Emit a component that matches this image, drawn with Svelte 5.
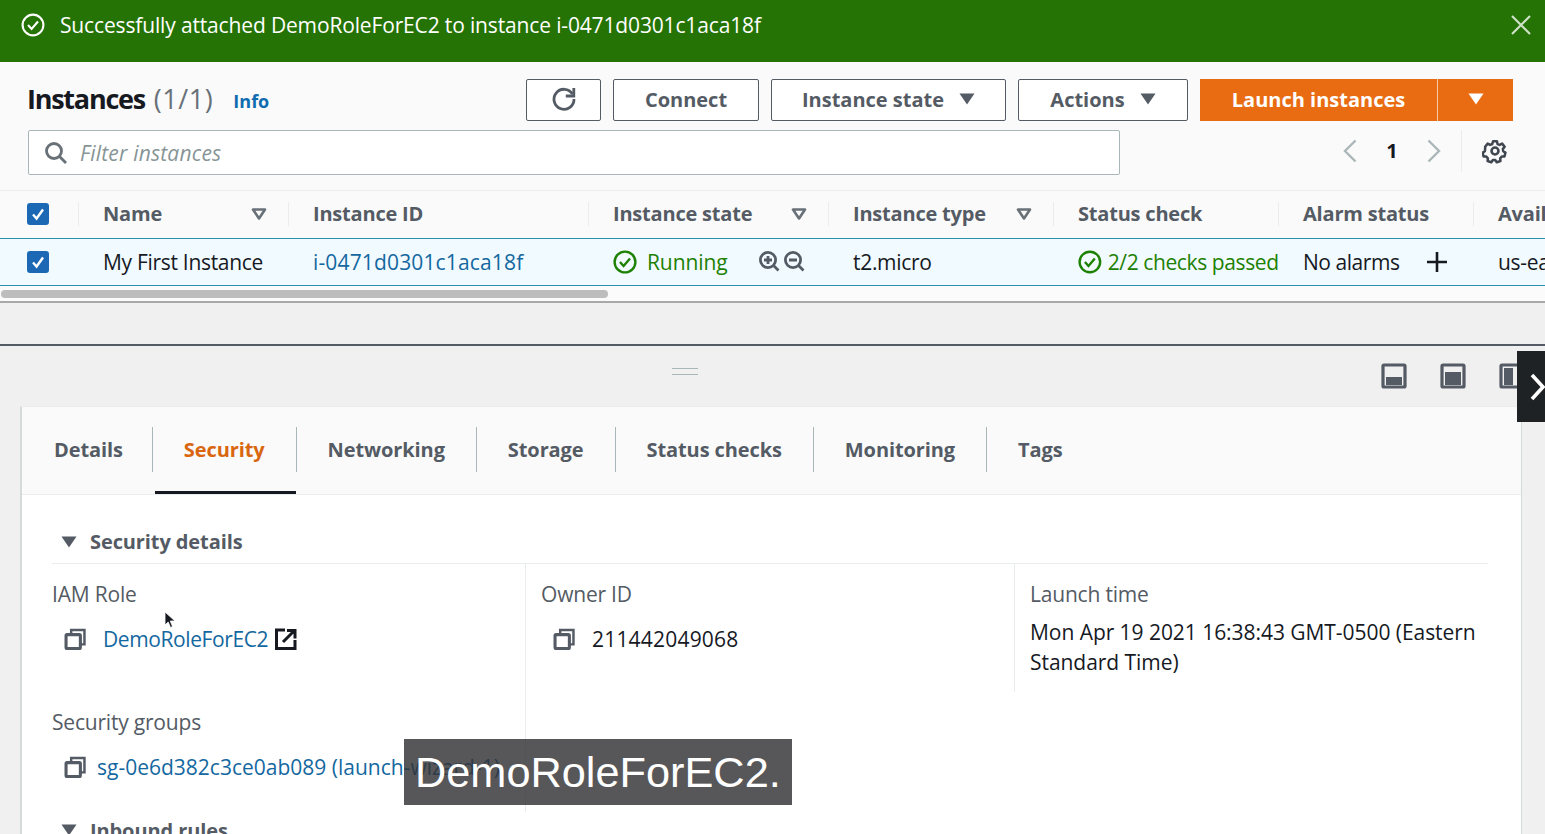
<script>
  const columns = [
    { label: 'Name', width: 210, filter: true },
    { label: 'Instance ID', width: 300 },
    { label: 'Instance state', width: 240, filter: true },
    { label: 'Instance type', width: 225, filter: true },
    { label: 'Status check', width: 225 },
    { label: 'Alarm status', width: 195 },
    { label: 'Availability Zone', width: 200 }
  ];

  const tabs = ['Details', 'Security', 'Networking', 'Storage', 'Status checks', 'Monitoring', 'Tags'];
  const activeTab = 'Security';
</script>

{#snippet check()}
  <span class="checkbox">
    <svg viewBox="0 0 22 22" width="22" height="22">
      <path d="M6 11.5l3.6 4L16 6.5" fill="none" stroke="#fff" stroke-width="2.4" />
    </svg>
  </span>
{/snippet}

{#snippet copy()}
  <svg class="copy" viewBox="0 0 21.500 21.500" width="22" height="22">
    <path d="M7 6V2h13v14h-4" fill="none" stroke="#545b64" stroke-width="2.4" />
    <rect x="2" y="6.500" width="14" height="13.500" fill="none" stroke="#545b64" stroke-width="3" rx="1" />
  </svg>
{/snippet}

{#snippet okIcon()}
  <svg class="ok" viewBox="0 0 24 24" width="24" height="24">
    <circle cx="12" cy="12" r="10.400" fill="none" stroke="#1d8102" stroke-width="2.400" />
    <path d="M7 12l3.600 4L17 8.500" fill="none" stroke="#1d8102" stroke-width="2.400" />
  </svg>
{/snippet}

{#snippet filterIcon()}
  <svg class="sort" viewBox="0 0 16 12" width="16" height="12">
    <path d="M2 1.500h12L8 10.500z" fill="none" stroke="#687078" stroke-width="2.600" stroke-linejoin="round" />
  </svg>
{/snippet}

{#snippet caret(color)}
  <svg viewBox="0 0 16 12" width="16" height="12">
    <path d="M0.500 0.500h15L8 11.500z" fill={color} />
  </svg>
{/snippet}

<div class="page">
  <div class="flash">
    <svg viewBox="0 0 24 24" width="24" height="24">
      <circle cx="12" cy="12" r="10.400" fill="none" stroke="#fff" stroke-width="2.100" />
      <path d="M7 12l3.600 4L17 8.500" fill="none" stroke="#fff" stroke-width="2.100" />
    </svg>
    <span class="flash-text">Successfully attached DemoRoleForEC2 to instance i-0471d0301c1aca18f</span>
    <svg class="close" viewBox="0 0 20 20" width="20" height="20">
      <path d="M1 1l18 18M19 1L1 19" stroke="#cfe0c8" stroke-width="2.200" />
    </svg>
  </div>

  <div class="list-head">
    <div class="title-row">
      <h1>Instances <span class="count">(1/1)</span></h1>
      <span class="info">Info</span>
      <div class="actions">
        <button class="btn icon-btn" aria-label="Refresh">
          <svg viewBox="0 0 26 26" width="26" height="26">
            <path d="M21.500 8A10 10 0 1 0 23 13" fill="none" stroke="#545b64" stroke-width="2.800" />
            <path d="M22.800 2v8h-8" fill="none" stroke="#545b64" stroke-width="2.800" />
          </svg>
        </button>
        <button class="btn connect">Connect</button>
        <button class="btn state">Instance state {@render caret('#545b64')}</button>
        <button class="btn acts">Actions {@render caret('#545b64')}</button>
        <div class="launch">
          <button class="launch-main">Launch instances</button>
          <button class="launch-caret" aria-label="More">{@render caret('#fff')}</button>
        </div>
      </div>
    </div>
    <div class="filter-row">
      <div class="filter">
        <svg viewBox="0 0 24 24" width="24" height="24">
          <circle cx="10" cy="10" r="7.500" fill="none" stroke="#687078" stroke-width="2.800" />
          <path d="M15.500 15.500l6.500 6.500" stroke="#687078" stroke-width="2.800" />
        </svg>
        <span>Filter instances</span>
      </div>
      <div class="pager">
        <svg viewBox="0 0 14 24" width="14" height="24"><path d="M12.500 1.500L2 12l10.500 10.500" fill="none" stroke="#aab7b8" stroke-width="2.400" /></svg>
        <b>1</b>
        <svg viewBox="0 0 14 24" width="14" height="24"><path d="M1.500 1.500L12 12 1.500 22.500" fill="none" stroke="#aab7b8" stroke-width="2.400" /></svg>
      </div>
      <div class="settings">
        <svg viewBox="0 0 24 24" width="26" height="26">
          <path d="M10 2h4l.6 2.800 2.200 1 2.500-1.400 2.600 3.200-1.800 2.200.3 2.400 2.300 1.500-1 3.900-2.800.1-1.600 1.800.3 2.800-3.800 1.300-1.600-2.300h-2.400l-1.600 2.300-3.800-1.300.3-2.800-1.600-1.800-2.800-.1-1-3.900 2.300-1.500.3-2.400L1.900 7.600l2.600-3.200L7 5.800l2.200-1z" fill="none" stroke="#414750" stroke-width="2.600" stroke-linejoin="round" transform="translate(1.200 1.200) scale(.9)" />
          <circle cx="12" cy="12" r="3.200" fill="none" stroke="#414750" stroke-width="2.400" />
        </svg>
      </div>
    </div>
  </div>

  <div class="table">
    <div class="thead">
      <div class="check-cell">{@render check()}</div>
      {#each columns as col}
        <div class="th" style="width: {col.width}px">
          <span>{col.label}</span>
          {#if col.filter}{@render filterIcon()}{/if}
        </div>
      {/each}
    </div>
    <div class="trow">
      <div class="check-cell">{@render check()}</div>
      <div class="td" style="width: 210px">My First Instance</div>
      <div class="td link id" style="width: 300px">i-0471d0301c1aca18f</div>
      <div class="td" style="width: 240px">
        <span class="green running">{@render okIcon()} Running</span>
        <svg class="zoom-icons" viewBox="0 0 48 24" width="48" height="24">
          <circle cx="10" cy="10" r="7.600" fill="none" stroke="#545b64" stroke-width="2.800" />
          <path d="M15.500 15.500l5 5M6 10h8M10 6v8" stroke="#545b64" stroke-width="2.800" />
          <circle cx="35" cy="10" r="7.600" fill="none" stroke="#545b64" stroke-width="2.800" />
          <path d="M40.500 15.500l5 5M31 10h8" stroke="#545b64" stroke-width="2.800" />
        </svg>
      </div>
      <div class="td" style="width: 225px">t2.micro</div>
      <div class="td status" style="width: 225px">
        <span class="green checks">{@render okIcon()} <span class="clip">2/2 checks passed</span></span>
      </div>
      <div class="td alarms" style="width: 195px">
        No alarms
        <svg class="plus" viewBox="0 0 22 22" width="22" height="22">
          <path d="M11 1v20M1 11h20" stroke="#16191f" stroke-width="2.600" />
        </svg>
      </div>
      <div class="td" style="width: 200px">us-east-1a</div>
    </div>
    <div class="scrollbar"><div class="thumb"></div></div>
  </div>

  <div class="gap"></div>

  <div class="split">
    <div class="split-top">
      <div class="handle"></div>
      <div class="modes">
        <svg viewBox="0 0 26 26" width="26" height="26"><rect x="2" y="2" width="22" height="22" rx="1" fill="none" stroke="#545b64" stroke-width="3.200" /><rect x="5" y="14" width="16" height="8" fill="#545b64" /></svg>
        <svg viewBox="0 0 26 26" width="26" height="26"><rect x="2" y="2" width="22" height="22" rx="1" fill="none" stroke="#545b64" stroke-width="3.200" /><rect x="5" y="9" width="16" height="13" fill="#545b64" /></svg>
        <svg viewBox="0 0 26 26" width="26" height="26"><rect x="2" y="2" width="22" height="22" rx="1" fill="none" stroke="#545b64" stroke-width="3.200" /><rect x="5" y="5" width="9" height="17" fill="#545b64" /></svg>
      </div>
      <div class="collapse">
        <svg viewBox="0 0 16 34" width="16" height="34"><path d="M3 5l11 12L3 29" fill="none" stroke="#fff" stroke-width="3.600" /></svg>
      </div>
    </div>

    <div class="card">
      <div class="tabs">
        {#each tabs as tab}
          <div class="tab" class:active={tab === activeTab}>{tab}</div>
        {/each}
      </div>
      <div class="section">
        <div class="section-title">
          <svg viewBox="0 0 16 12" width="16" height="12"><path d="M0.500 0.500h15L8 11.500z" fill="#545b64" /></svg>
          Security details
        </div>
        <div class="details">
          <div class="col first">
            <div class="label">IAM Role</div>
            <div class="value role">
              {@render copy()}
              <span class="link">DemoRoleForEC2</span>
              <svg class="ext" viewBox="0 0 22 22" width="22" height="22">
                <path d="M10 2H1.500v18.500H20V12" fill="none" stroke="#16191f" stroke-width="3" />
                <path d="M8 14L19 3M12 2.500h8v8" fill="none" stroke="#16191f" stroke-width="3" />
              </svg>
            </div>
            <div class="label sg-label">Security groups</div>
            <div class="value sg">
              {@render copy()}
              <span class="link">sg-0e6d382c3ce0ab089 (launch-wizard-1)</span>
            </div>
          </div>
          <div class="col second">
            <div class="label">Owner ID</div>
            <div class="value owner">
              {@render copy()}
              <span>211442049068</span>
            </div>
          </div>
          <div class="col third">
            <div class="label">Launch time</div>
            <div class="time">Mon Apr 19 2021 16:38:43 GMT-0500 (Eastern Standard Time)</div>
          </div>
        </div>
        <div class="section-title inbound">
          <svg viewBox="0 0 16 12" width="16" height="12"><path d="M0.500 0.500h15L8 11.500z" fill="#545b64" /></svg>
          Inbound rules
        </div>
      </div>
    </div>
  </div>

  <svg class="cursor" viewBox="0 0 12 18" width="12" height="18">
    <path d="M1 1v13l3.200-3 2.300 5.500 2-1L6.300 10H11z" fill="#16191f" stroke="#fff" stroke-width=".8" />
  </svg>
  <div class="caption">DemoRoleForEC2.</div>
</div>

<style>
  :global(body) {
    margin: 0;
    background: #f2f3f3;
    overflow: hidden;
  }

  .page {
    position: relative;
    width: 1545px;
    height: 834px;
    overflow: hidden;
    background: #f1f0f0;
    font-family: "Open Sans", "Noto Sans", sans-serif;
    color: #16191f;
  }

  .flash {
    height: 62px;
    box-sizing: border-box;
    padding: 0 14px 13px 21px;
    background: #257304;
    color: #fff;
    display: flex;
    align-items: center;
    gap: 15px;
    font-size: 21px;
  }

  .flash-text {
    flex: 1;
    letter-spacing: -0.15px;
  }

  .list-head {
    background: #fafafa;
    height: 128px;
    box-sizing: border-box;
    padding: 17px 32px 0 28px;
  }

  .title-row {
    display: flex;
    align-items: center;
    height: 42px;
  }

  h1 {
    margin: -3px 0 0 -1px;
    font-size: 27px;
    font-weight: 700;
    letter-spacing: -1.25px;
    word-spacing: 3px;
    color: #16191f;
  }

  .count {
    font-weight: 400;
    letter-spacing: 0.6px;
    color: #687078;
  }

  .info {
    margin-left: 20px;
    margin-top: 2px;
    font-size: 18px;
    font-weight: 700;
    color: #0f6cb0;
  }

  .actions {
    margin-left: auto;
    display: flex;
    gap: 12px;
  }

  button {
    font-family: inherit;
    cursor: pointer;
  }

  .btn {
    height: 42px;
    box-sizing: border-box;
    background: #fff;
    border: 1px solid #545b64;
    border-radius: 2px;
    color: #545b64;
    font-size: 20px;
    font-weight: 700;
    display: flex;
    align-items: center;
    justify-content: center;
    gap: 15px;
    padding: 0 0 2px;
  }

  .icon-btn { width: 75px; }
  .connect { width: 146px; }
  .state { width: 235px; }
  .acts { width: 170px; }

  .launch {
    display: flex;
    height: 42px;
    background: #e96c13;
    border-radius: 2px;
  }

  .launch button {
    background: #e96c13;
    border: 0;
    color: #fff;
    font-size: 20px;
    font-weight: 700;
    height: 42px;
    padding: 0 0 2px;
    display: flex;
    align-items: center;
    justify-content: center;
  }

  .launch-main {
    width: 238px;
    border-right: 1px solid #f5c9a5 !important;
    box-sizing: border-box;
  }

  .launch-caret { width: 75px; }

  .filter-row {
    display: flex;
    align-items: center;
    margin-top: 9px;
    height: 45px;
  }

  .filter {
    width: 1092px;
    height: 45px;
    box-sizing: border-box;
    background: #fff;
    border: 1px solid #aab7b8;
    border-radius: 2px;
    display: flex;
    align-items: center;
    gap: 12px;
    padding-left: 15px;
    color: #879596;
    font-style: italic;
    font-size: 21px;
    letter-spacing: 0.2px;
  }

  .pager {
    margin-left: 223px;
    margin-top: -4px;
    width: 98px;
    display: flex;
    align-items: center;
    justify-content: space-between;
    font-size: 20px;
  }

  .pager b {
    color: #16191f;
  }

  .settings {
    margin-left: 20px;
    margin-top: -4px;
    padding-left: 20px;
    border-left: 1px solid #eaeded;
    height: 42px;
    display: flex;
    align-items: center;
  }

  .table {
    background: #fafafa;
    border-top: 1px solid #eaeded;
    border-bottom: 2px solid #a9a9a9;
    height: 113px;
    box-sizing: border-box;
    overflow: hidden;
  }

  .thead,
  .trow {
    display: flex;
    width: 1800px;
  }

  .thead {
    height: 47px;
    align-items: center;
    padding-bottom: 2px;
    box-sizing: border-box;
  }

  .check-cell {
    width: 78px;
    flex: none;
    display: flex;
    padding-left: 27px;
    box-sizing: border-box;
  }

  .checkbox {
    width: 22px;
    height: 22px;
    background: #1c68b4;
    border-radius: 3px;
    display: block;
  }

  .th {
    flex: none;
    height: 24px;
    box-sizing: border-box;
    border-left: 1px solid #eaeded;
    padding: 0 21px 0 24px;
    display: flex;
    align-items: center;
    justify-content: space-between;
    font-size: 20px;
    font-weight: 700;
    color: #545b64;
    letter-spacing: -0.2px;
    white-space: nowrap;
  }

  .trow {
    height: 48px;
    align-items: center;
    background: #f1faff;
    border-top: 1px solid #2a8fa8;
    border-bottom: 1px solid #2a8fa8;
    box-sizing: border-box;
  }

  .td {
    flex: none;
    box-sizing: border-box;
    padding-left: 25px;
    font-size: 21px;
    display: flex;
    align-items: center;
    white-space: nowrap;
    letter-spacing: -0.3px;
  }

  .link {
    color: #14689f;
  }

  .td.id {
    letter-spacing: 0.15px;
  }

  .green {
    color: #1d8102;
    display: flex;
    align-items: center;
    gap: 10px;
  }

  .running {
    width: 145px;
    letter-spacing: -0.1px;
  }

  .checks {
    gap: 6px;
    width: 200px;
  }

  .clip {
    width: 172px;
    overflow: hidden;
    letter-spacing: -0.4px;
  }

  .alarms {
    letter-spacing: -0.45px;
  }

  .plus {
    margin-left: 26px;
  }

  .scrollbar {
    height: 15px;
    background: #fbfbfb;
    padding: 4px 0 0 1px;
    box-sizing: border-box;
  }

  .thumb {
    width: 607px;
    height: 8px;
    border-radius: 4px;
    background: #bdbdbd;
  }

  .gap {
    height: 41px;
  }

  .split {
    border-top: 2px solid #545b64;
  }

  .split-top {
    position: relative;
    height: 60px;
    display: flex;
    justify-content: center;
  }

  .handle {
    position: absolute;
    left: 672px;
    top: 22px;
    width: 26px;
    height: 5px;
    border-top: 1px solid #aab7b8;
    border-bottom: 1px solid #aab7b8;
  }

  .modes {
    position: absolute;
    top: 17px;
    left: 1381px;
    display: flex;
    gap: 33px;
  }

  .collapse {
    position: absolute;
    left: 1517px;
    top: 5px;
    width: 28px;
    height: 71px;
    background: #1f2225;
    display: flex;
    align-items: center;
    padding-left: 12px;
    box-sizing: border-box;
  }

  .card {
    margin-left: 20px;
    width: 1502px;
    height: 430px;
    box-sizing: border-box;
    background: #fff;
    border-left: 2px solid #d5dbdb;
    border-right: 1px solid #d5dbdb;
    border-top: 1px solid #eaeded;
  }

  .tabs {
    height: 88px;
    box-sizing: border-box;
    background: #fafafa;
    border-bottom: 1px solid #eaeded;
    display: flex;
    align-items: center;
    padding-bottom: 2px;
  }

  .tab {
    height: 45px;
    display: flex;
    align-items: center;
    position: relative;
    padding: 0 31px;
    border-left: 1px solid #aab7b8;
    font-size: 20px;
    font-weight: 700;
    color: #545b64;
    letter-spacing: -0.1px;
  }

  .tab:first-child {
    border-left: 0;
    padding-left: 32px;
    padding-right: 29px;
  }

  .tab.active {
    color: #d9660f;
  }

  .tab.active::after {
    content: "";
    position: absolute;
    left: 2px;
    right: 0;
    bottom: -22px;
    height: 3px;
    background: #16191f;
  }

  .section {
    padding: 0 33px 0 30px;
  }

  .section-title {
    height: 69px;
    box-sizing: border-box;
    padding-bottom: 2px;
    padding-top: 27px;
    display: flex;
    align-items: center;
    gap: 13px;
    font-size: 20px;
    font-weight: 700;
    color: #545b64;
    letter-spacing: -0.1px;
    padding-left: 9px;
    border-bottom: 1px solid #eaeded;
  }

  .details {
    display: grid;
    grid-template-columns: 473px 489px 1fr;
  }

  .col {
    padding-top: 16px;
    padding-left: 15px;
    box-sizing: border-box;
    border-left: 1px solid #eaeded;
    font-size: 21px;
    letter-spacing: -0.2px;
  }

  .col.first {
    border-left: 0;
    padding-left: 0;
    height: 248px;
  }

  .col.second {
    height: 248px;
  }

  .col.third {
    height: 128px;
    padding-right: 8px;
  }

  .label {
    color: #545b64;
    line-height: 28px;
  }

  .value {
    display: flex;
    align-items: center;
    margin-top: 17px;
    line-height: 28px;
  }

  .copy {
    margin-left: 12px;
    flex: none;
  }

  .role .copy { margin-right: 17px; }
  .owner .copy { margin-right: 17px; }
  .sg .copy { margin-right: 11px; }

  .role .link,
  .sg .link {
    white-space: nowrap;
  }

  .role .link {
    letter-spacing: -0.4px;
  }

  .sg .link {
    letter-spacing: 0;
  }

  .owner span {
    letter-spacing: 0.2px;
  }

  .ext {
    margin-left: 7px;
  }

  .sg-label {
    margin-top: 55px;
  }

  .time {
    margin-top: 9px;
    line-height: 30px;
    letter-spacing: -0.05px;
  }

  .inbound {
    border-bottom: 0;
    margin-top: -29px;
  }

  .cursor {
    position: absolute;
    left: 164px;
    top: 611px;
  }

  .caption {
    position: absolute;
    left: 404px;
    top: 739px;
    width: 388px;
    height: 66px;
    box-sizing: border-box;
    padding-left: 11px;
    background: rgba(50, 50, 52, 0.82);
    color: #fff;
    font-family: "Liberation Sans", Arial, sans-serif;
    font-size: 43.3px;
    line-height: 66px;
    white-space: nowrap;
  }
</style>
